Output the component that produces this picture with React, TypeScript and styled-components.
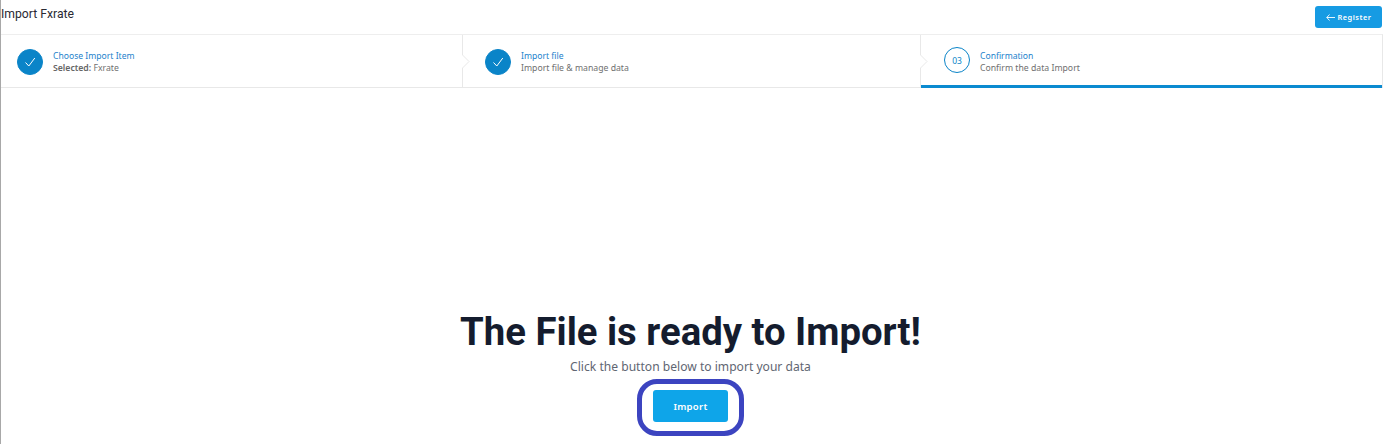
import React from "react";
import styled, { createGlobalStyle } from "styled-components";

const GlobalStyle = createGlobalStyle`
  html, body {
    margin: 0;
    padding: 0;
    background: #fff;
    font-family: "Noto Sans", "Open Sans", sans-serif;
  }
`;

const Page = styled.div`
  width: 1388px;
  height: 444px;
  box-sizing: border-box;
  border-left: 1px solid #a8a8a8;
  overflow: hidden;
  display: flex;
  flex-direction: column;
`;

const TopBar = styled.div`
  height: 34px;
  box-sizing: border-box;
  padding: 6px 6px 0 0;
  display: flex;
  justify-content: space-between;
  align-items: flex-start;
`;

const Title = styled.div`
  font-family: "Roboto", sans-serif;
  font-size: 12.2px;
  line-height: 16px;
  color: #2a2a33;
`;

const RegisterButton = styled.button`
  width: 67px;
  height: 22px;
  border: none;
  border-radius: 3px;
  background: #169be3;
  color: #fff;
  font-family: "Noto Sans", sans-serif;
  font-size: 7.4px;
  font-weight: 600;
  letter-spacing: 0.5px;
  display: flex;
  align-items: center;
  justify-content: center;
  gap: 3px;
  padding: 0;
`;

const Stepper = styled.div`
  height: 54px;
  width: 1382px;
  box-sizing: border-box;
  border-top: 1px solid #eeeeee;
  border-bottom: 1px solid #e8e8e8;
  border-right: 1px solid #e8e8e8;
  display: grid;
  grid-template-columns: 461px 458px 1fr;
`;

const Step = styled.div<{ $active?: boolean; $inset: number }>`
  position: relative;
  box-sizing: border-box;
  height: 53px;
  padding-left: ${(p) => p.$inset}px;
  display: flex;
  align-items: center;
  gap: 10px;
  border-bottom: ${(p) => (p.$active ? "3px solid #0a8ad0" : "none")};
  margin-bottom: ${(p) => (p.$active ? "-1px" : "0")};
`;

const Chevron = styled.svg`
  position: absolute;
  right: -8px;
  top: 0;
  z-index: 1;
`;

const Circle = styled.div<{ $done?: boolean }>`
  width: 26px;
  height: 26px;
  border-radius: 50%;
  box-sizing: border-box;
  flex: none;
  display: flex;
  align-items: center;
  justify-content: center;
  font-size: 8.5px;
  color: #0a84c8;
  background: ${(p) => (p.$done ? "#0a84c8" : "#fff")};
  border: 1px solid #0a84c8;
`;

const StepText = styled.div<{ $active?: boolean }>`
  display: flex;
  flex-direction: column;
  margin-top: ${(p) => (p.$active ? "4px" : "1px")};
`;

const StepName = styled.div`
  font-size: 8.6px;
  line-height: 12px;
  color: #1c82cc;
`;

const StepHint = styled.div`
  font-size: 8.7px;
  line-height: 12px;
  color: #6f6f6f;

  b {
    font-weight: 600;
    color: #666666;
  }
`;

const Main = styled.div`
  flex: 1;
  display: flex;
  flex-direction: column;
  align-items: center;
  padding: 219px 8px 0 0;
`;

const Heading = styled.h1`
  margin: 0;
  font-family: "Roboto", sans-serif;
  font-size: 38.3px;
  line-height: 50px;
  font-weight: 700;
  color: #141c2e;
`;

const SubHeading = styled.p`
  margin: 1px 0 0;
  font-size: 12.1px;
  line-height: 18px;
  color: #5f6672;
`;

const Ring = styled.div`
  margin-top: 3px;
  width: 107px;
  height: 57px;
  box-sizing: border-box;
  border: 5px solid #3c44c0;
  border-radius: 20px;
  display: flex;
  align-items: center;
  justify-content: center;
`;

const ImportButton = styled.button`
  width: 75px;
  height: 32px;
  margin-top: -3px;
  border: none;
  border-radius: 3px;
  background: #0ea5e9;
  color: #fff;
  font-family: "Noto Sans", sans-serif;
  font-size: 9.5px;
  font-weight: 600;
  letter-spacing: 0.3px;
  padding: 0;
`;

const steps = [
  { name: "Choose Import Item", done: true, inset: 16 },
  { name: "Import file", hint: "Import file & manage data", done: true, inset: 23 },
  { name: "Confirmation", hint: "Confirm the data Import", done: false, inset: 24 },
];

const Check = () => (
  <svg width="14" height="14" viewBox="0 0 14 14" fill="none">
    <path d="M2.5 7.5 L5.8 11 L11.8 3" stroke="#fff" strokeWidth="1" />
  </svg>
);

const StepChevron = () => (
  <Chevron width="8" height="53" viewBox="0 0 8 53" fill="none">
    <path d="M0.5 0 V20 L7 26.5 L0.5 33 V53" stroke="#e8e8e8" fill="#fff" />
  </Chevron>
);

export default function App() {
  return (
    <Page>
      <GlobalStyle />
      <TopBar>
        <Title>Import Fxrate</Title>
        <RegisterButton>
          <svg width="9" height="7" viewBox="0 0 9 7" fill="none">
            <path d="M3.5 0.5 L0.8 3.5 L3.5 6.5 M0.8 3.5 H9" stroke="#fff" strokeWidth="0.9" />
          </svg>
          Register
        </RegisterButton>
      </TopBar>
      <Stepper>
        {steps.map((s, i) => (
          <Step key={s.name} $inset={s.inset} $active={i === 2}>
            <Circle $done={s.done}>{s.done ? <Check /> : "03"}</Circle>
            <StepText $active={i === 2}>
              <StepName>{s.name}</StepName>
              <StepHint>
                {s.hint ? (
                  s.hint
                ) : (
                  <>
                    <b>Selected:</b> Fxrate
                  </>
                )}
              </StepHint>
            </StepText>
            {i < 2 && <StepChevron />}
          </Step>
        ))}
      </Stepper>
      <Main>
        <Heading>The File is ready to Import!</Heading>
        <SubHeading>Click the button below to import your data</SubHeading>
        <Ring>
          <ImportButton>Import</ImportButton>
        </Ring>
      </Main>
    </Page>
  );
}
